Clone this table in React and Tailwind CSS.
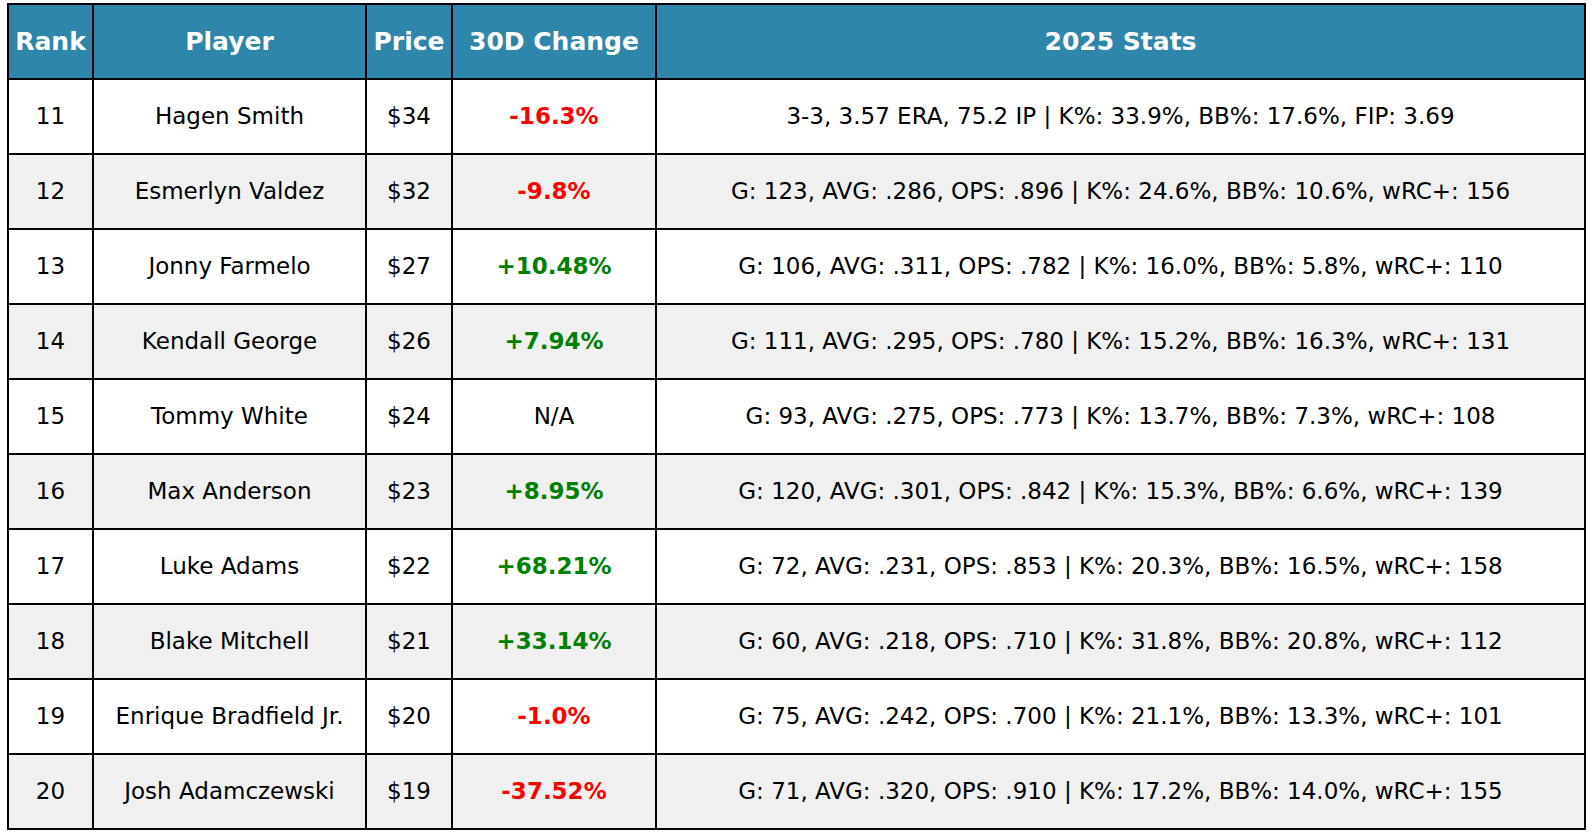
const rows = [
  ["11", "Hagen Smith", "$34", "-16.3%", "3-3, 3.57 ERA, 75.2 IP | K%: 33.9%, BB%: 17.6%, FIP: 3.69"],
  ["12", "Esmerlyn Valdez", "$32", "-9.8%", "G: 123, AVG: .286, OPS: .896 | K%: 24.6%, BB%: 10.6%, wRC+: 156"],
  ["13", "Jonny Farmelo", "$27", "+10.48%", "G: 106, AVG: .311, OPS: .782 | K%: 16.0%, BB%: 5.8%, wRC+: 110"],
  ["14", "Kendall George", "$26", "+7.94%", "G: 111, AVG: .295, OPS: .780 | K%: 15.2%, BB%: 16.3%, wRC+: 131"],
  ["15", "Tommy White", "$24", "N/A", "G: 93, AVG: .275, OPS: .773 | K%: 13.7%, BB%: 7.3%, wRC+: 108"],
  ["16", "Max Anderson", "$23", "+8.95%", "G: 120, AVG: .301, OPS: .842 | K%: 15.3%, BB%: 6.6%, wRC+: 139"],
  ["17", "Luke Adams", "$22", "+68.21%", "G: 72, AVG: .231, OPS: .853 | K%: 20.3%, BB%: 16.5%, wRC+: 158"],
  ["18", "Blake Mitchell", "$21", "+33.14%", "G: 60, AVG: .218, OPS: .710 | K%: 31.8%, BB%: 20.8%, wRC+: 112"],
  ["19", "Enrique Bradfield Jr.", "$20", "-1.0%", "G: 75, AVG: .242, OPS: .700 | K%: 21.1%, BB%: 13.3%, wRC+: 101"],
  ["20", "Josh Adamczewski", "$19", "-37.52%", "G: 71, AVG: .320, OPS: .910 | K%: 17.2%, BB%: 14.0%, wRC+: 155"],
];

const headers = ["Rank", "Player", "Price", "30D Change", "2025 Stats"];

function changeClass(v) {
  if (v.startsWith("+")) return "text-[#008000] font-bold";
  if (v.startsWith("-")) return "text-[#ff0000] font-bold";
  return "text-black";
}

export default function App() {
  return (
    <div className="w-[1592px] h-[833px] bg-white pl-[7px] pt-[3px] font-['DejaVu_Sans',sans-serif]">
      <table className="border-collapse table-fixed w-[1579px]">
        <colgroup>
          <col className="w-[85px]" />
          <col className="w-[273px]" />
          <col className="w-[86px]" />
          <col className="w-[204px]" />
          <col className="w-[929px]" />
        </colgroup>
        <thead>
          <tr className="h-[75px] bg-[#2e86ab]">
            {headers.map((h) => (
              <th key={h} className="border-2 border-black text-white font-bold text-[25px] text-center p-0 whitespace-nowrap">
                {h}
              </th>
            ))}
          </tr>
        </thead>
        <tbody>
          {rows.map((r, i) => (
            <tr key={r[0]} className={`h-[75px] ${i % 2 ? "bg-[#f0f0f0]" : "bg-white"}`}>
              <td className="border-2 border-black text-center text-[23px] p-0 text-black">{r[0]}</td>
              <td className="border-2 border-black text-center text-[23px] p-0 text-black whitespace-nowrap">{r[1]}</td>
              <td className="border-2 border-black text-center text-[23px] p-0 text-black">{r[2]}</td>
              <td className={`border-2 border-black text-center text-[23px] p-0 ${changeClass(r[3])}`}>{r[3]}</td>
              <td className="border-2 border-black text-center text-[23px] p-0 text-black whitespace-nowrap">{r[4]}</td>
            </tr>
          ))}
        </tbody>
      </table>
    </div>
  );
}
